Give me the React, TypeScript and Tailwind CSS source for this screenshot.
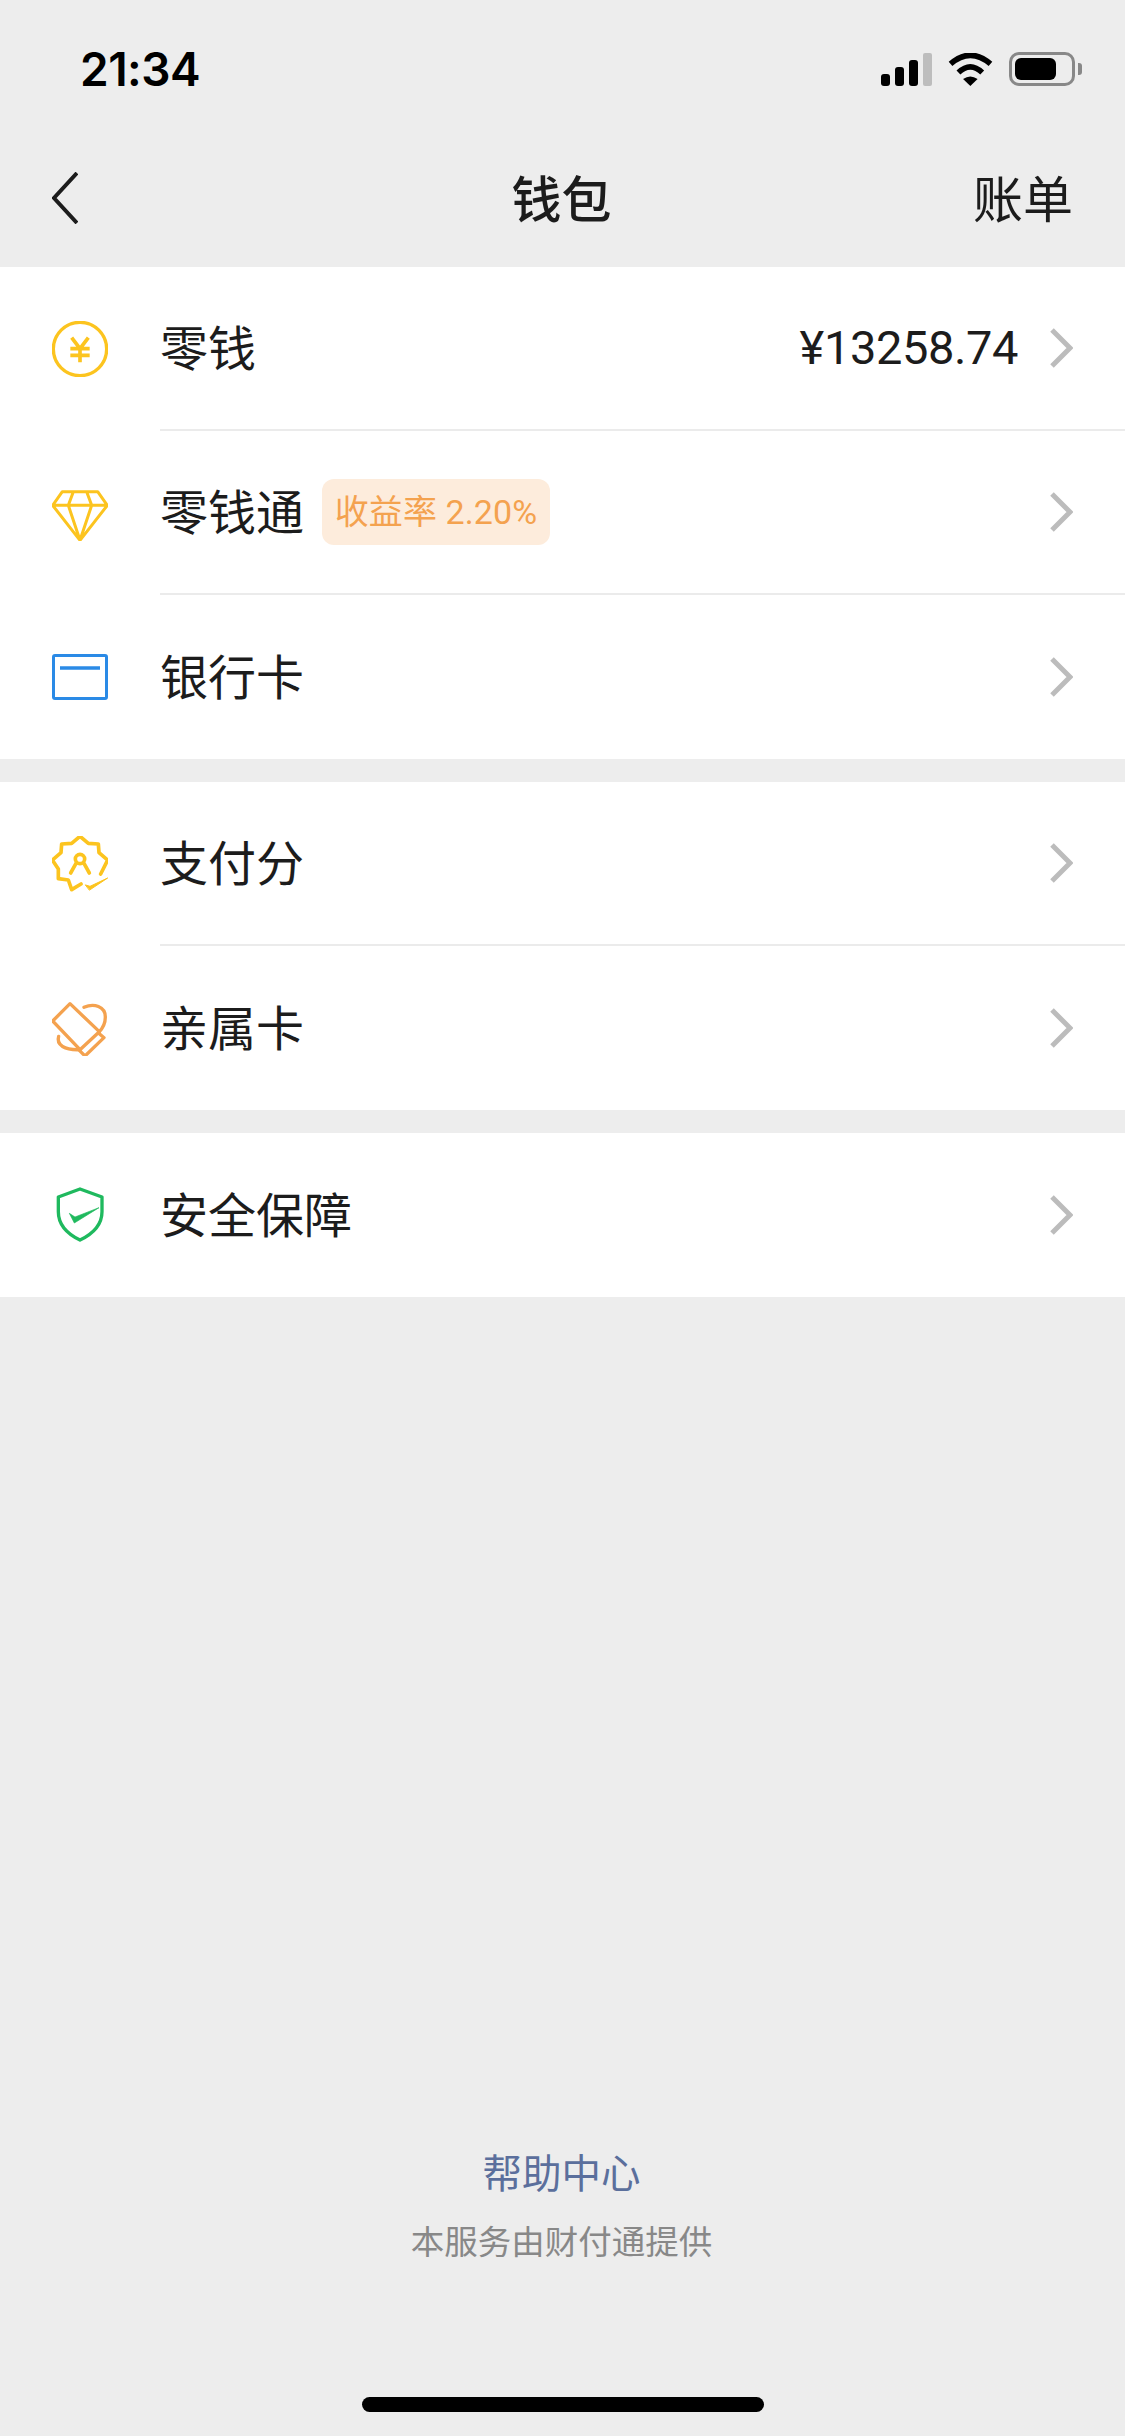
const font = { fontFamily: '"Noto Sans CJK SC", sans-serif' };

function Yuan() {
  return (
    <svg viewBox="66 63 168 168" className="w-[56px] h-[56px] shrink-0" fill="none" stroke="#fcc41f" strokeWidth="10">
      <circle cx="150" cy="147" r="80" />
      <path d="M125 113L150 146L175 113M121 146H179M121 166H179M150 146V187" strokeWidth="11" />
    </svg>
  );
}
function Diamond() {
  return (
    <svg viewBox="66 42 168 168" className="w-[56px] h-[56px] shrink-0" fill="none" stroke="#fcc41f" strokeWidth="9" strokeLinejoin="round">
      <path d="M97 62H203L232 103L150 208L68 103ZM68 103H232M130 62L115 103L150 208L185 103L170 62" />
    </svg>
  );
}
function Card() {
  return (
    <svg viewBox="0 0 56 46" className="w-[56px] h-[46px] shrink-0" fill="none" stroke="#2a8ae6">
      <rect x="1.5" y="1.5" width="53" height="43" rx="1.5" strokeWidth="3" />
      <path d="M8 14H48" strokeWidth="3.5" />
    </svg>
  );
}
function Score() {
  return (
    <svg viewBox="66 46 168 168" className="w-[56px] h-[56px] shrink-0" fill="none" stroke="#fcc41f" strokeWidth="11" strokeLinejoin="round" strokeLinecap="round">
      <path d="M212 160L233 118L207 96L205 70L175 68L150 47L125 68L95 70L93 96L67 118L85 145L85 174L115 178L125 207L153 190" />
      <circle cx="150" cy="115" r="14" />
      <path d="M138 128L122 157M162 128L178 157" />
      <path d="M167 193L180 197L233 172L179 208Z" fill="#fcc41f" strokeWidth="3" />
    </svg>
  );
}
function Family() {
  return (
    <svg viewBox="66 57 168 168" className="w-[56px] h-[56px] shrink-0" fill="none" stroke="#f4a24f" strokeWidth="10" strokeLinejoin="round" strokeLinecap="round">
      <path d="M120 68L208 152L150 206L68 120Z" />
      <path d="M208 158L222 170L165 225L148 208" />
      <path d="M162 79C192 66 226 76 226 108C226 126 218 142 207 153" />
      <path d="M86 166C78 192 104 208 150 206" />
    </svg>
  );
}
function Shield() {
  return (
    <svg viewBox="66 51 168 168" className="w-[56px] h-[56px] shrink-0" fill="none" stroke="#1fb95e" strokeWidth="10" strokeLinejoin="round">
      <path d="M150 57L216 81V125C216 165 185 193 150 210C115 193 85 165 85 125V81Z" />
      <path d="M118 130L135 141L207 113L133 159Z" fill="#1fb95e" strokeWidth="2" />
    </svg>
  );
}
function Chevron() {
  return (
    <svg viewBox="0 0 24 40" className="w-[24px] h-[40px] shrink-0" fill="none" stroke="#bcbcbc" strokeWidth="5">
      <path d="M3 2L21 20L3 38" />
    </svg>
  );
}

function Row({ icon, label, last, children }: { icon: React.ReactNode; label: string; last?: boolean; children?: React.ReactNode }) {
  return (
    <div className="flex items-center h-[164px] pl-[52px]">
      {icon}
      <div className={`ml-[52px] flex-1 h-full flex items-center pr-[52px] ${last ? "" : "border-b-2 border-[#ebebeb]"}`}>
        <span className="text-[48px] leading-[64px] mb-[6px] text-[#1c1c1c]" style={font}>{label}</span>
        {children}
      </div>
    </div>
  );
}

export default function App() {
  return (
    <div className="w-[1125px] min-h-[2436px] bg-[#ededed] flex flex-col" style={font}>
      <div className="h-[138px] flex items-center justify-between pl-[80px] pr-[43px]">
        <span className="text-[46px] font-semibold tracking-[-0.5px] text-black" style={{ fontFamily: "Inter, sans-serif" }}>21:34</span>
        <div className="flex items-center gap-[16px]">
          <svg viewBox="0 0 51 33" className="w-[51px] h-[33px]">
            <rect x="0" y="21" width="9" height="12" rx="3" fill="#000" />
            <rect x="14" y="14" width="9" height="19" rx="3" fill="#000" />
            <rect x="28" y="7" width="9" height="26" rx="3" fill="#000" />
            <rect x="42" y="0" width="9" height="33" rx="2" fill="#bdbdbd" />
          </svg>
          <svg viewBox="265 65 135 100" className="w-[45px] h-[33px]" fill="none" stroke="#000">
            <path d="M272 98Q332 46 393 98" strokeWidth="17" />
            <path d="M296 124Q332 90 368 124" strokeWidth="17" />
            <path d="M332 165L310 144Q332 128 354 144Z" fill="#000" stroke="none" />
          </svg>
          <div className="flex items-center gap-[3px]">
            <div className="w-[66px] h-[34px] rounded-[10px] border-[3px] border-[#888888] p-[3px] bg-transparent">
              <div className="w-[41px] h-full rounded-[6px] bg-black" />
            </div>
            <div className="w-[4px] h-[12px] rounded-r-[3px] bg-[#888888]" />
          </div>
        </div>
      </div>

      <div className="h-[129px] pb-[13px] grid grid-cols-[1fr_auto_1fr] items-center pl-[52px] pr-[52px]">
        <svg viewBox="0 0 26 52" className="w-[26px] h-[52px] mt-[4px]" fill="none" stroke="#1c1c1c" strokeWidth="4">
          <path d="M25 1L2 26L25 51" />
        </svg>
        <span className="text-[50px] leading-[64px] font-medium mr-[2px] text-[#1c1c1c]">钱包</span>
        <span className="text-[50px] leading-[64px] text-[#1c1c1c] text-right">账单</span>
      </div>

      <div className="bg-white">
        <Row icon={<Yuan />} label="零钱">
          <span className="ml-auto text-[47px] leading-[64px] tracking-[-0.4px] text-[#1c1c1c] mr-[31px]" style={{ fontFamily: "Roboto, sans-serif" }}>¥13258.74</span>
          <Chevron />
        </Row>
        <Row icon={<Diamond />} label="零钱通">
          <span className="ml-[18px] w-[228px] h-[66px] rounded-[12px] bg-[#fdecdc] flex items-center justify-center text-[34px] tracking-[0.1px] text-[#f4a24f] whitespace-nowrap" style={{ fontFamily: 'Roboto, "Noto Sans CJK SC", sans-serif' }}>收益率 2.20%</span>
          <div className="ml-auto"><Chevron /></div>
        </Row>
        <Row icon={<Card />} label="银行卡" last>
          <div className="ml-auto"><Chevron /></div>
        </Row>
      </div>

      <div className="bg-white mt-[23px]">
        <Row icon={<Score />} label="支付分">
          <div className="ml-auto"><Chevron /></div>
        </Row>
        <Row icon={<Family />} label="亲属卡" last>
          <div className="ml-auto"><Chevron /></div>
        </Row>
      </div>

      <div className="bg-white mt-[23px]">
        <Row icon={<Shield />} label="安全保障" last>
          <div className="ml-auto"><Chevron /></div>
        </Row>
      </div>

      <div className="mt-auto flex flex-col items-center">
        <span className="text-[39.5px] leading-[40px] mr-[2px] text-[#5b6f9c]">帮助中心</span>
        <span className="mt-[29px] text-[33.5px] leading-[40px] mr-[2px] text-[#888888]">本服务由财付通提供</span>
        <div className="mt-[137px] mb-[24px] w-[402px] h-[15px] rounded-full bg-black" />
      </div>
    </div>
  );
}
